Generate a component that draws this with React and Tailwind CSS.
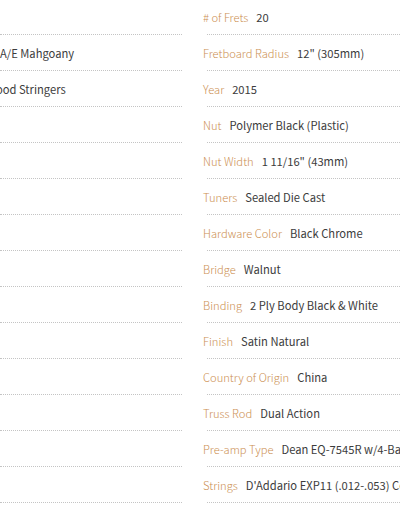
const LEFT_SPECS = [
  ['Body Shape', 'Dreadnought Cutaway', ''],
  ['Back & Sides', 'Select', 'A/E Mahgoany'],
  ['Neck', 'Mahogany w/ Walnut & Rosew', 'ood Stringers'],
  ['Top', 'Solid Spruce', ''],
  ['Bracing', 'Scalloped X', ''],
  ['Neck Shape', 'C Shape', ''],
  ['Fingerboard', 'Walnut', ''],
  ['Inlays', 'Dot', ''],
  ['Scale', '25.5"', ''],
  ['Body Depth', '4.5"', ''],
  ['Neck Joint', 'Set', ''],
  ['Pickguard', 'Tortoise', ''],
  ['Electronics', 'Yes', ''],
  ['Case', 'Optional', ''],
]

const RIGHT_SPECS = [
  ['# of Frets', '20'],
  ['Fretboard Radius', '12" (305mm)'],
  ['Year', '2015'],
  ['Nut', 'Polymer Black (Plastic)'],
  ['Nut Width', '1 11/16" (43mm)'],
  ['Tuners', 'Sealed Die Cast'],
  ['Hardware Color', 'Black Chrome'],
  ['Bridge', 'Walnut'],
  ['Binding', '2 Ply Body Black & White'],
  ['Finish', 'Satin Natural'],
  ['Country of Origin', 'China'],
  ['Truss Rod', 'Dual Action'],
  ['Pre-amp Type', 'Dean EQ-7545R w/4-Band EQ'],
  ['Strings', "D'Addario EXP11 (.012-.053) Coated Phosphor Bronze"],
]

export default function App() {
  return (
    <div className="w-[400px] h-[516px] overflow-hidden bg-white text-[11.2px] font-['Noto_Sans_CJK_KR','Noto_Sans',sans-serif]">
      <div className="flex gap-[25px] -mt-px">
        {/* left column, scrolled off the left edge */}
        <ul className="w-[182px] shrink-0">
          {LEFT_SPECS.map(([label, hidden, shown]) => (
            <li key={label} className="h-[36px] pt-px flex items-center border-b border-dotted border-[#c4c4c4] whitespace-nowrap">
              <div className="w-0 flex justify-end">
                <span className="font-light text-[#cc8f52]">{label}</span>
                <span className="ml-2 text-[#3c3c3c] mr-[3px]">{hidden}</span>
              </div>
              <span className={shown.startsWith('ood') ? '-ml-[4px] text-[#3c3c3c]' : 'text-[#3c3c3c]'}>{shown}</span>
            </li>
          ))}
        </ul>

        {/* right column */}
        <ul className="flex-1 min-w-0">
          {RIGHT_SPECS.map(([label, value]) => (
            <li key={label} className="h-[36px] pt-px flex items-center border-b border-dotted border-[#c4c4c4] whitespace-nowrap">
              <span className="-ml-1 font-light text-[#cc8f52]">{label}</span>
              <span className="ml-2 text-[#3c3c3c]">{value}</span>
            </li>
          ))}
        </ul>
      </div>
    </div>
  )
}
